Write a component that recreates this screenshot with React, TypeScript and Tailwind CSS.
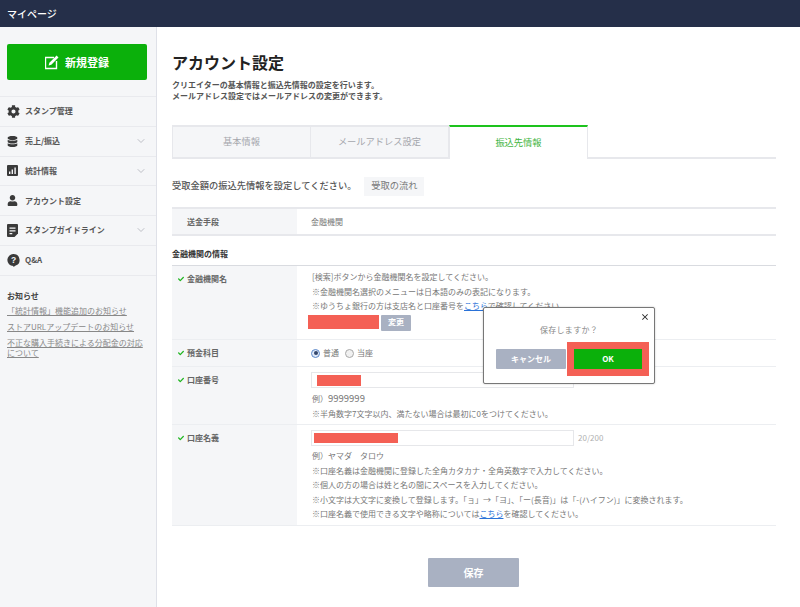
import type { ReactNode } from "react";
import { FaCog, FaDatabase, FaUser, FaCheck } from "react-icons/fa";
import { FiChevronDown } from "react-icons/fi";
import { MdClose } from "react-icons/md";

const font = { fontFamily: '"Noto Sans CJK JP", "Liberation Sans", sans-serif' };

function EditIcon() {
  return (
    <svg width="15" height="15" viewBox="1 0 15 15" className="mr-[5px]">
      <path d="M10 2.5H1.5v11h11V6" fill="none" stroke="#fff" strokeWidth="1.4" />
      <path d="M12.6 0.6l1.9 1.9-7.2 7.2-2.7.8.8-2.7z" fill="#fff" />
    </svg>
  );
}

function ChartIcon() {
  return (
    <svg width="11" height="11" viewBox="0 0 11 11">
      <rect width="11" height="11" rx="1" fill="#3a3a3a" />
      <path d="M2 9V6.5h1.4V9zM4.6 9V4.5H6V9zM7.4 9V2.5h1.4V9z" fill="#f5f6f8" />
    </svg>
  );
}

function DocIcon() {
  return (
    <svg width="11" height="13" viewBox="0 0 11 13">
      <path d="M1 0h9a1 1 0 0 1 1 1v8.5L7.5 13H1a1 1 0 0 1-1-1V1a1 1 0 0 1 1-1z" fill="#3a3a3a" />
      <path d="M2.5 3.5h6v1.3h-6zM2.5 6.2h6v1.3h-6zM2.5 8.9h2.8v1.3H2.5z" fill="#f5f6f8" />
    </svg>
  );
}

function QaIcon() {
  return (
    <svg width="13" height="13" viewBox="0 0 13 13">
      <path d="M6.5 0a6 6 0 0 1 2.2 11.6L6.6 13l-.4-1A6 6 0 0 1 6.5 0z" fill="#3a3a3a" />
      <text x="6.5" y="9" textAnchor="middle" fontSize="8.5" fontWeight="700" fill="#f5f6f8" fontFamily="Liberation Sans">?</text>
    </svg>
  );
}

const menu = [
  { label: "スタンプ管理", icon: <FaCog size={13} />, arrow: false },
  { label: "売上/振込", icon: <FaDatabase size={11} />, arrow: true },
  { label: "統計情報", icon: <ChartIcon />, arrow: true },
  { label: "アカウント設定", icon: <FaUser size={11} />, arrow: false },
  { label: "スタンプガイドライン", icon: <DocIcon />, arrow: true },
  { label: "Q&A", icon: <QaIcon />, arrow: false },
];

function Sidebar() {
  return (
    <aside className="w-[157px] shrink-0 bg-[#f5f6f8] border-r border-[#dfe1e8]">
      <div className="pl-[7px] pr-[9px] pt-[17px] pb-[16px]">
        <div className="h-[36px] rounded-[2px] bg-[#0bb00b] flex items-center justify-center text-white text-[11px] font-bold">
          <EditIcon />
          新規登録
        </div>
      </div>
      <ul className="border-t border-[#e9eaee]">
        {menu.map((m) => (
          <li key={m.label} className="h-[29.75px] border-b border-[#e9eaee] flex items-center pl-[7px] pr-[9px] text-[8px] font-bold text-[#555]">
            <span className="w-[18px] flex justify-start text-[#3a3a3a]">{m.icon}</span>
            <span className="flex-1">{m.label}</span>
            {m.arrow && <FiChevronDown size={12} className="text-[#bdbfc6]" />}
          </li>
        ))}
      </ul>
      <div className="pl-[7px] pr-[12px] pt-[14px] text-[8px]">
        <div className="font-bold leading-[11px] text-[#444] mb-[5px]">お知らせ</div>
        <ul className="space-y-[6px] leading-[10px] text-[#888] underline">
          <li>「統計情報」機能追加のお知らせ</li>
          <li>ストアURLアップデートのお知らせ</li>
          <li>不正な購入手続きによる分配金の対応について</li>
        </ul>
      </div>
    </aside>
  );
}

function Tabs() {
  const off = "h-[34px] flex items-center justify-center bg-[#f5f6f8] border-t-2 border-b-2 border-l border-[#e7e8ec] text-[#a5a7ad]";
  return (
    <div className="mt-[24px] flex text-[9.25px]">
      <div className={off + " w-[138px]"}>基本情報</div>
      <div className={off + " w-[139px] border-r"}>メールアドレス設定</div>
      <div className="w-[139px] h-[34px] flex items-center justify-center border-t-2 border-t-[#1dc31d] border-x border-x-[#e7e8ec] text-[#3fb53f]">振込先情報</div>
      <div className="flex-1 h-[34px] border-b-2 border-[#e7e8ec]" />
    </div>
  );
}

function Row({ label, h, children }: { label: string; h: string; children: ReactNode }) {
  return (
    <div className={"flex border-b border-[#eceef1] " + h}>
      <div className="w-[125px] shrink-0 bg-[#f5f6f8] pl-[6px] pt-[7px] flex items-start text-[8px] leading-[12px] font-bold text-[#666]">
        <FaCheck size={6} className="text-[#1fb51f] mt-[3px] mr-[3px]" />
        {label}
      </div>
      <div className="flex-1 pl-[15px] text-[8px] text-[#777]">{children}</div>
    </div>
  );
}

const Red = ({ w, h }: { w: string; h: string }) => <div className={"bg-[#f46055] " + w + " " + h} />;
const Link = ({ children }: { children: ReactNode }) => <span className="text-[#2a72d8] underline">{children}</span>;

function Radio({ on }: { on?: boolean }) {
  return (
    <span className={"w-[9px] h-[9px] rounded-full inline-flex items-center justify-center border " + (on ? "border-[#5b87c9] bg-[#dfe9f8]" : "border-[#a8a8a8] bg-[#f1f1f1]")}>
      {on && <span className="w-[4px] h-[4px] rounded-full bg-[#33456b]" />}
    </span>
  );
}

function Form() {
  return (
    <div className="leading-[14.5px]">
      <Row label="金融機関名" h="h-[74px]">
        <div className="pt-[4px]">[検索]ボタンから金融機関名を設定してください。</div>
        <div>※金融機関名選択のメニューは日本語のみの表記になります。</div>
        <div>※ゆうちょ銀行の方は支店名と口座番号を<Link>こちら</Link>で確認してください。</div>
        <div className="flex items-start mt-[1px] -ml-[4px]">
          <Red w="w-[71px]" h="h-[14px]" />
          <div className="ml-[2px] w-[30px] h-[16px] rounded-[1px] bg-[#a9b1c2] text-white font-bold text-[8px] flex items-center justify-center">変更</div>
        </div>
      </Row>
      <Row label="預金科目" h="h-[27px]">
        <div className="h-full flex items-center -ml-px">
          <Radio on />
          <span className="ml-[3px] mr-[6px]">普通</span>
          <Radio />
          <span className="ml-[3px]">当座</span>
        </div>
      </Row>
      <Row label="口座番号" h="h-[58px]">
        <div className="mt-[5px] -ml-px w-[263px] h-[16px] border border-[#e6e7ea] pl-[5px] flex items-center">
          <Red w="w-[44px]" h="h-[11px]" />
        </div>
        <div className="mt-[3px]">例）<span className="text-[9.5px]">9999999</span></div>
        <div>※半角数字7文字以内、満たない場合は最初に0をつけてください。</div>
      </Row>
      <Row label="口座名義" h="h-[101px]">
        <div className="flex items-center mt-[5px] -ml-px">
          <div className="w-[263px] h-[16px] border border-[#e6e7ea] pl-[2px] flex items-center">
            <Red w="w-[84px]" h="h-[10px]" />
          </div>
          <span className="ml-[4px] text-[#b0b0b0]">20/200</span>
        </div>
        <div className="mt-[3px]">例）ヤマダ　タロウ</div>
        <div>※口座名義は金融機関に登録した全角カタカナ・全角英数字で入力してください。</div>
        <div>※個人の方の場合は姓と名の間にスペースを入力してください。</div>
        <div className="whitespace-nowrap">※小文字は大文字に変換して登録します。「ョ」→「ヨ」、「ー(長音)」は「-(ハイフン)」に変換されます。</div>
        <div>※口座名義で使用できる文字や略称については<Link>こちら</Link>を確認してください。</div>
      </Row>
    </div>
  );
}

function Dialog() {
  return (
    <div className="absolute left-[483px] top-[307px] w-[172px] h-[77px] bg-white border border-[#777] rounded-[2px] shadow-[0_0_2px_rgba(0,0,0,0.25)]">
      <MdClose size={10} className="absolute right-[4px] top-[4px] text-[#222]" />
      <div className="pt-[15px] text-center text-[8px] tracking-[0.3px] leading-[14px] text-[#888]">保存しますか？</div>
      <div className="absolute left-[12px] top-[41px] w-[70px] h-[20px] rounded-[1px] bg-[#a9b1c2] text-white text-[8px] font-bold flex items-center justify-center">キャンセル</div>
      <div className="absolute left-[83px] top-[34px] w-[82px] h-[34px] border-[7px] border-[#f46055]">
        <div className="w-full h-full bg-[#0bb00b] text-white text-[8px] font-bold flex items-center justify-center">OK</div>
      </div>
    </div>
  );
}

export default function App() {
  return (
    <div style={font} className="relative w-[800px] h-[607px] overflow-hidden bg-white flex flex-col">
      <header className="h-[27px] shrink-0 bg-[#252f49] flex items-center px-[7px] text-white text-[10px] font-medium">マイページ</header>
      <div className="flex flex-1 min-h-0">
        <Sidebar />
        <main className="flex-1 pl-[15px] pr-[24px]">
          <h1 className="mt-[23px] text-[16px] leading-[24px] font-bold text-[#222]">アカウント設定</h1>
          <p className="mt-[5px] text-[8px] leading-[11px] font-bold text-[#555]">
            クリエイターの基本情報と振込先情報の設定を行います。<br />
            メールアドレス設定ではメールアドレスの変更ができます。
          </p>
          <Tabs />
          <div className="mt-[17px] flex items-center h-[20px] text-[9.25px] font-medium text-[#555]">
            受取金額の振込先情報を設定してください。
            <span className="ml-[8px] h-[19px] w-[60px] bg-[#f5f6f8] flex items-center justify-center font-normal text-[#777]">受取の流れ</span>
          </div>
          <div className="mt-[11px] flex h-[29px] border-y-2 border-[#e7e8ec] text-[8px] items-stretch">
            <div className="w-[125px] bg-[#f5f6f8] pl-[15px] flex items-center font-bold text-[#666]">送金手段</div>
            <div className="pl-[14px] flex items-center text-[#777]">金融機関</div>
          </div>
          <h2 className="mt-[11px] text-[8px] leading-[14px] font-bold text-[#333] pb-[4px] border-b border-[#d9dbe0]">金融機関の情報</h2>
          <Form />
          <div className="mt-[32px] flex justify-center">
            <div className="-ml-px w-[91px] h-[29px] rounded-[1px] bg-[#a9b1c2] text-white text-[10px] font-bold flex items-center justify-center">保存</div>
          </div>
        </main>
      </div>
      <Dialog />
    </div>
  );
}
